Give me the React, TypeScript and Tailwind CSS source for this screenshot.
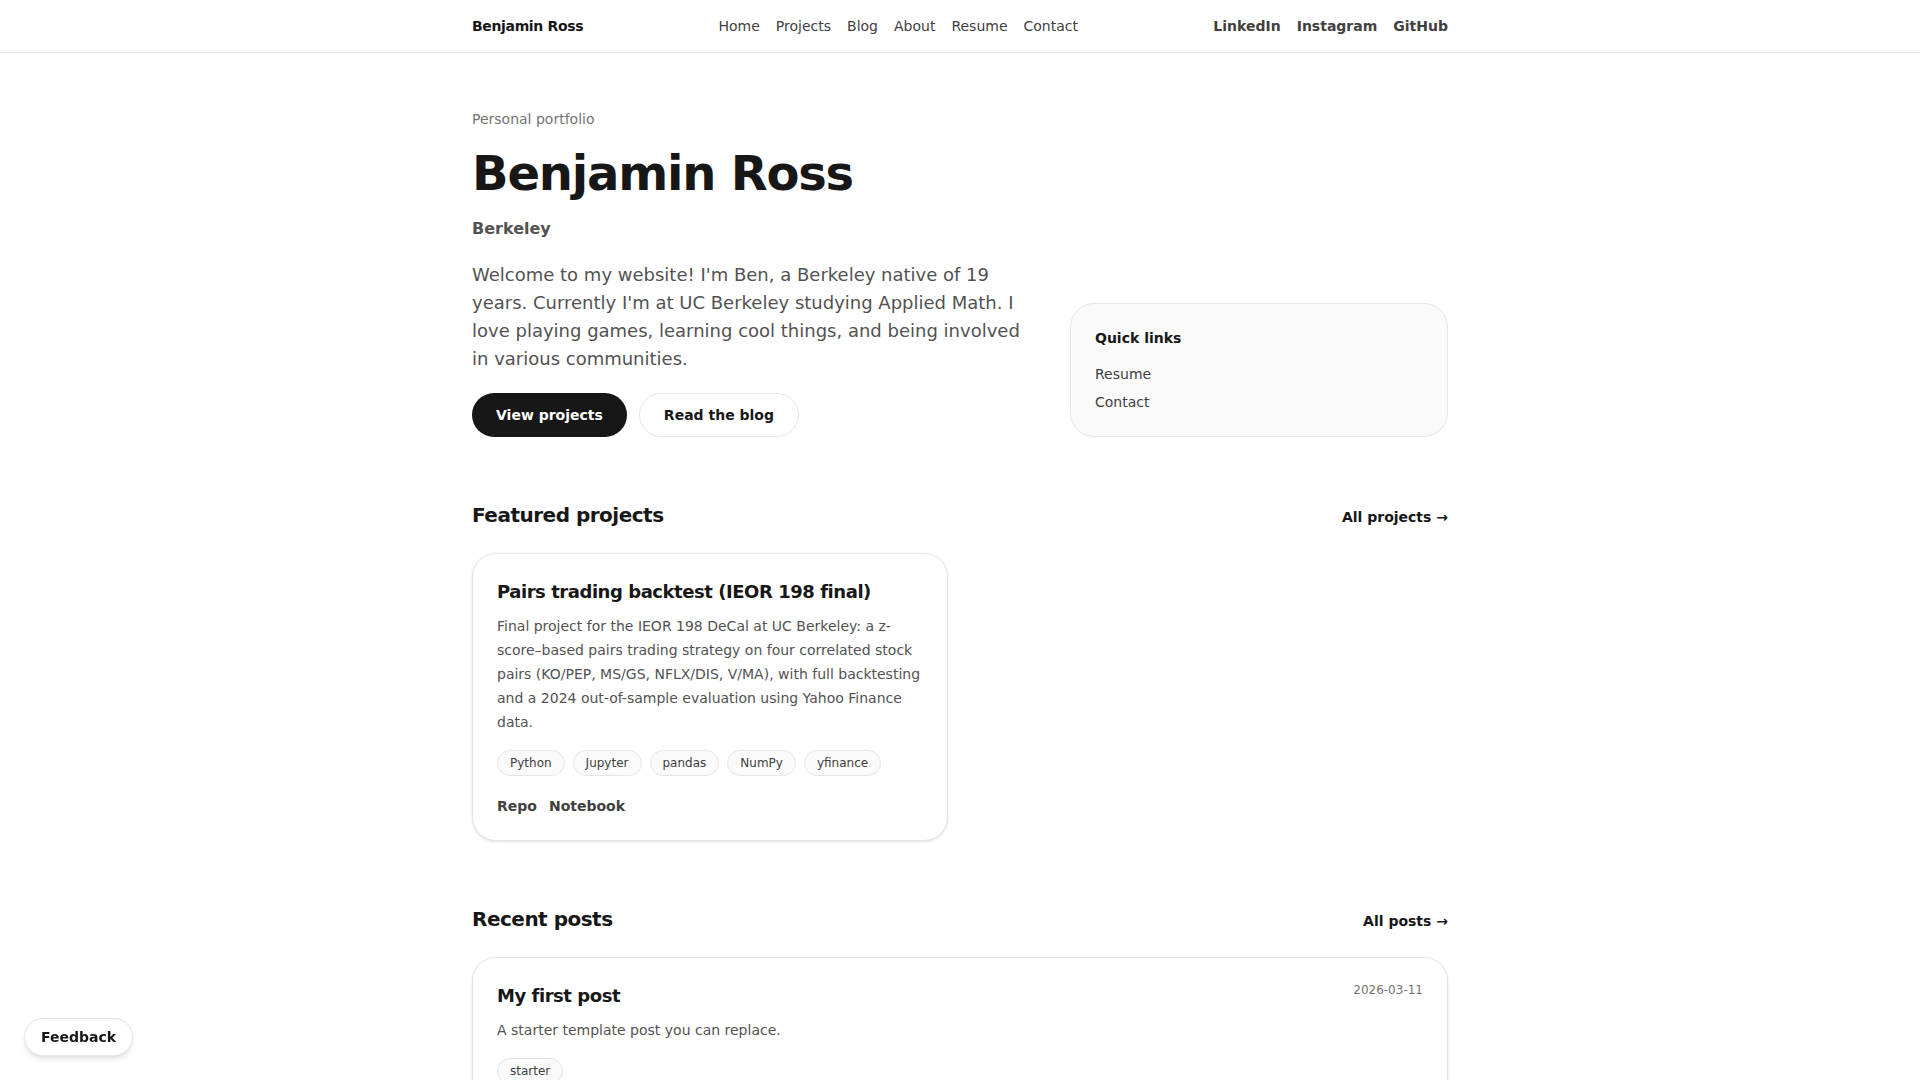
import React from "react";

const tags = ["Python", "Jupyter", "pandas", "NumPy", "yfinance"];

function Tag({ label }: { label: string }) {
  return (
    <span className="inline-flex items-center rounded-full border border-neutral-200 bg-neutral-50 px-3 py-[4px] text-xs leading-4 text-neutral-700">
      {label}
    </span>
  );
}

export default function App() {
  return (
    <div className="min-h-screen w-full bg-white font-['DejaVu_Sans',sans-serif] text-neutral-900">
      <header className="border-b border-neutral-200">
        <div className="mx-auto flex max-w-5xl items-center justify-between px-6 py-4 text-sm leading-5">
          <a className="font-bold tracking-tight text-neutral-900">Benjamin Ross</a>
          <nav className="flex items-center gap-4 text-neutral-700">
            <a>Home</a>
            <a>Projects</a>
            <a>Blog</a>
            <a>About</a>
            <a>Resume</a>
            <a>Contact</a>
          </nav>
          <div className="flex items-center gap-4 font-bold text-neutral-700">
            <a>LinkedIn</a>
            <a>Instagram</a>
            <a>GitHub</a>
          </div>
        </div>
      </header>

      <main className="mx-auto max-w-5xl px-6 pt-14 pb-24">
        <section className="grid grid-cols-[1fr_378px] items-end gap-10">
          <div>
            <p className="text-sm leading-5 text-neutral-500">Personal portfolio</p>
            <h1 className="mt-5 text-5xl leading-none font-bold tracking-tight text-neutral-900">
              Benjamin Ross
            </h1>
            <p className="mt-5 text-base leading-6 font-bold text-neutral-600">Berkeley</p>
            <p className="mt-5 text-lg leading-7 text-neutral-600">
              Welcome to my website! I'm Ben, a Berkeley native of 19 years. Currently I'm at UC
              Berkeley studying Applied Math. I love playing games, learning cool things, and being
              involved in various communities.
            </p>
            <div className="mt-5 flex items-center gap-3">
              <a className="rounded-full bg-neutral-900 px-6 py-3 text-sm leading-5 font-bold text-white">
                View projects
              </a>
              <a className="rounded-full border border-neutral-200 bg-white px-6 py-[11px] text-sm leading-5 font-bold text-neutral-900">
                Read the blog
              </a>
            </div>
          </div>
          <aside className="rounded-3xl border border-neutral-200 bg-neutral-50 p-6">
            <p className="text-sm leading-5 font-bold text-neutral-900">Quick links</p>
            <ul className="mt-4 flex flex-col gap-2 text-sm leading-5 text-neutral-700">
              <li>Resume</li>
              <li>Contact</li>
            </ul>
          </aside>
        </section>

        <section className="mt-16">
          <div className="mb-6 flex items-baseline justify-between">
            <h2 className="text-xl leading-7 font-bold tracking-tight text-neutral-900">
              Featured projects
            </h2>
            <a className="text-sm leading-5 font-bold text-neutral-900">All projects →</a>
          </div>
          <div className="grid grid-cols-2 gap-6">
            <article className="rounded-3xl border border-neutral-200 bg-white p-6 shadow-sm">
              <h3 className="text-lg leading-7 font-bold tracking-tight text-neutral-900">
                Pairs trading backtest (IEOR 198 final)
              </h3>
              <p className="mt-2 text-sm leading-6 text-neutral-600">
                Final project for the IEOR 198 DeCal at UC Berkeley: a z-score–based pairs trading
                strategy on four correlated stock pairs (KO/PEP, MS/GS, NFLX/DIS, V/MA), with full
                backtesting and a 2024 out-of-sample evaluation using Yahoo Finance data.
              </p>
              <div className="mt-4 flex flex-wrap gap-2">
                {tags.map((t) => (
                  <Tag key={t} label={t} />
                ))}
              </div>
              <div className="mt-5 flex items-center gap-3 text-sm leading-5 font-bold text-neutral-700">
                <a>Repo</a>
                <a>Notebook</a>
              </div>
            </article>
          </div>
        </section>

        <section className="mt-16">
          <div className="mb-6 flex items-baseline justify-between">
            <h2 className="text-xl leading-7 font-bold tracking-tight text-neutral-900">
              Recent posts
            </h2>
            <a className="text-sm leading-5 font-bold text-neutral-900">All posts →</a>
          </div>
          <article className="rounded-3xl border border-neutral-200 bg-white p-6 shadow-sm">
            <div className="flex items-start justify-between gap-4">
              <h3 className="text-lg leading-7 font-bold tracking-tight text-neutral-900">
                My first post
              </h3>
              <span className="text-xs leading-4 text-neutral-500">2026-03-11</span>
            </div>
            <p className="mt-2 text-sm leading-6 text-neutral-600">
              A starter template post you can replace.
            </p>
            <div className="mt-4 flex flex-wrap gap-2">
              <Tag label="starter" />
            </div>
          </article>
        </section>
      </main>

      <button className="fixed bottom-6 left-6 rounded-full border border-neutral-200 bg-white px-4 py-2 text-sm leading-5 font-bold text-neutral-900 shadow-md">
        Feedback
      </button>
    </div>
  );
}
